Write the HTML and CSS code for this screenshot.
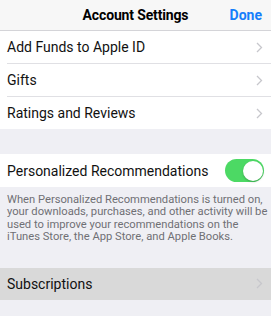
FILE: index.html
```html
<!DOCTYPE html>
<html>
<head>
<meta charset="utf-8">
<link rel="stylesheet" href="styles.css">
</head>
<body>
<div class="screen">
  <header class="navbar">
    <div class="nav-title">Account Settings</div>
    <div class="nav-done">Done</div>
  </header>
  <div class="group">
    <div class="row"><span class="label">Add Funds to Apple ID</span><svg class="chev" viewBox="0 0 7 11"><path d="M1 1 L5.5 5.5 L1 10" fill="none" stroke="#c7c7cc" stroke-width="1.3"/></svg></div>
    <div class="row"><span class="label">Gifts</span><svg class="chev" viewBox="0 0 7 11"><path d="M1 1 L5.5 5.5 L1 10" fill="none" stroke="#c7c7cc" stroke-width="1.3"/></svg></div>
    <div class="row last"><span class="label">Ratings and Reviews</span><svg class="chev" viewBox="0 0 7 11"><path d="M1 1 L5.5 5.5 L1 10" fill="none" stroke="#c7c7cc" stroke-width="1.3"/></svg></div>
  </div>
  <div class="group toggle-group">
    <div class="row last"><span class="label">Personalized Recommendations</span><span class="switch"><span class="knob"></span></span></div>
  </div>
  <p class="footer">When Personalized Recommendations is turned on, your downloads, purchases, and other activity will be used to improve your recommendations on the iTunes Store, the App Store, and Apple Books.</p>
  <div class="group sub-group">
    <div class="row last highlighted"><span class="label">Subscriptions</span><svg class="chev" viewBox="0 0 7 11"><path d="M1 1 L5.5 5.5 L1 10" fill="none" stroke="#c7c7cc" stroke-width="1.3"/></svg></div>
  </div>
</div>
</body>
</html>
```
FILE: styles.css
```css
* { box-sizing: border-box; }
html, body { margin: 0; padding: 0; }
body {
  background: #efeff4;
  font-family: Roboto, "Liberation Sans", sans-serif;
  color: #000;
  width: 271px;
  height: 316px;
  overflow: hidden;
}
.navbar {
  height: 31px;
  background: #f7f7f7;
  border-bottom: 1px solid #d4d4d8;
  display: flex;
  align-items: center;
  justify-content: center;
  position: relative;
}
.nav-title {
  font-size: 14px;
  font-weight: 700;
  letter-spacing: -0.15px;
}
.nav-done {
  position: absolute;
  right: 9px;
  top: 0;
  height: 30px;
  display: flex;
  align-items: center;
  font-size: 14px;
  font-weight: 700;
  color: #157efb;
}
.group {
  background: #fff;
  padding-left: 7px;
}
.row {
  height: 33px;
  display: flex;
  align-items: center;
  justify-content: space-between;
  border-bottom: 1px solid #e0e0e4;
  padding-right: 8px;
}
.row.last { border-bottom: none; height: 32px; }
.label {
  font-size: 14px;
  color: #111;
}
.chev { width: 7px; height: 11px; }
.toggle-group { margin-top: 25px; }
.toggle-group .row { height: 33px; padding-right: 7px; }
.switch {
  width: 39px;
  height: 23px;
  border-radius: 12px;
  background: #4cd964;
  position: relative;
  display: block;
}
.knob {
  position: absolute;
  right: 1.5px;
  top: 1.5px;
  width: 20px;
  height: 20px;
  border-radius: 50%;
  background: #fff;
  box-shadow: 0 1px 2px rgba(0,0,0,0.25);
}
.footer {
  margin: 0;
  padding: 7px 0 0 7px;
  font-size: 11.2px;
  line-height: 12.4px;
  color: #707075;
}
.sub-group { margin-top: 24px; padding-left: 0; }
.highlighted { background: #d9d9d9; padding-left: 7px; height: 34px; }
```
